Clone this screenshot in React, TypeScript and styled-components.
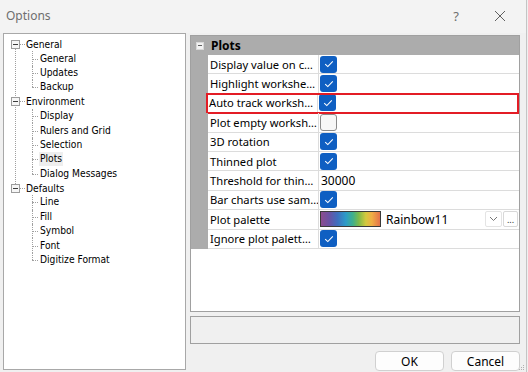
import React from 'react'
import styled, { createGlobalStyle, css } from 'styled-components'

const GlobalStyle = createGlobalStyle`
  html, body {
    margin: 0;
    padding: 0;
    background: #f0f0f0;
  }
  * {
    box-sizing: border-box;
  }
`

const tree = [
  { label: 'General', children: ['General', 'Updates', 'Backup'] },
  {
    label: 'Environment',
    children: ['Display', 'Rulers and Grid', 'Selection', 'Plots', 'Dialog Messages'],
  },
  { label: 'Defaults', children: ['Line', 'Fill', 'Symbol', 'Font', 'Digitize Format'] },
]

type Prop =
  | { label: string; kind: 'check'; checked: boolean; highlight?: boolean }
  | { label: string; kind: 'text'; value: string }
  | { label: string; kind: 'palette'; value: string }

const props: Prop[] = [
  { label: 'Display value on c…', kind: 'check', checked: true },
  { label: 'Highlight workshe…', kind: 'check', checked: true },
  { label: 'Auto track worksh…', kind: 'check', checked: true, highlight: true },
  { label: 'Plot empty worksh…', kind: 'check', checked: false },
  { label: '3D rotation', kind: 'check', checked: true },
  { label: 'Thinned plot', kind: 'check', checked: true },
  { label: 'Threshold for thin…', kind: 'text', value: '30000' },
  { label: 'Bar charts use sam…', kind: 'check', checked: true },
  { label: 'Plot palette', kind: 'palette', value: 'Rainbow11' },
  { label: 'Ignore plot palett…', kind: 'check', checked: true },
]

export default function App() {
  return (
    <>
      <GlobalStyle />
      <Dialog>
        <TitleBar>
          <Title>Options</Title>
          <TitleButton>?</TitleButton>
          <TitleButton>
            <svg width="12" height="12" viewBox="0 0 12 12">
              <path d="M1 1 L11 11 M11 1 L1 11" stroke="#606060" strokeWidth="1" fill="none" />
            </svg>
          </TitleButton>
        </TitleBar>

        <Body>
          <TreePanel>
            {tree.map((group, gi) => (
              <TreeGroup key={group.label} $last={gi === tree.length - 1}>
                <TreeRow>
                  <Expander />
                  <RootConnector />
                  <RootLabel>{group.label}</RootLabel>
                </TreeRow>
                <ChildList>
                  {group.children.map((child, ci) => (
                    <ChildRow key={child} $last={ci === group.children.length - 1}>
                      <ChildLabel $selected={child === 'Plots'}>{child}</ChildLabel>
                    </ChildRow>
                  ))}
                </ChildList>
              </TreeGroup>
            ))}
          </TreePanel>

          <RightColumn>
            <Grid>
              <CategoryRow>
                <CategoryMargin>
                  <CategoryToggle />
                </CategoryMargin>
                <CategoryLabel>Plots</CategoryLabel>
              </CategoryRow>
              {props.map(p => (
                <PropRow key={p.label}>
                  <Margin />
                  <PropCells $highlight={p.kind === 'check' && !!p.highlight}>
                    <PropLabel>{p.label}</PropLabel>
                    <PropValue>
                      {p.kind === 'check' && <CheckBox checked={p.checked} />}
                      {p.kind === 'text' && <ValueText>{p.value}</ValueText>}
                      {p.kind === 'palette' && (
                        <>
                          <Swatch />
                          <PaletteName>{p.value}</PaletteName>
                          <DropButton>
                            <svg width="9" height="6" viewBox="0 0 9 6">
                              <path d="M1 1 L4.5 4.5 L8 1" stroke="#777" strokeWidth="1" fill="none" />
                            </svg>
                          </DropButton>
                          <MoreButton>...</MoreButton>
                        </>
                      )}
                    </PropValue>
                  </PropCells>
                </PropRow>
              ))}
            </Grid>

            <Description />

            <ButtonRow>
              <DialogButton>OK</DialogButton>
              <DialogButton>Cancel</DialogButton>
            </ButtonRow>
          </RightColumn>
        </Body>

        <Grip>
          <svg width="6" height="6" viewBox="0 0 6 6">
            <rect x="4" y="0" width="1" height="1" fill="#b0b0b0" />
            <rect x="2" y="2" width="1" height="1" fill="#b0b0b0" />
            <rect x="4" y="2" width="1" height="1" fill="#b0b0b0" />
            <rect x="0" y="4" width="1" height="1" fill="#b0b0b0" />
            <rect x="2" y="4" width="1" height="1" fill="#b0b0b0" />
            <rect x="4" y="4" width="1" height="1" fill="#b0b0b0" />
          </svg>
        </Grip>
      </Dialog>
    </>
  )
}

function CheckBox({ checked }: { checked: boolean }) {
  return (
    <Box $checked={checked}>
      {checked && (
        <svg width="10" height="8" viewBox="0 0 10 8">
          <path d="M1.2 4.2 L3.8 6.6 L8.8 1.4" stroke="#fff" strokeWidth="1.1" fill="none" />
        </svg>
      )}
    </Box>
  )
}

const uiFont = `"Noto Sans", "Open Sans", sans-serif`
const treeFont = `"DejaVu Sans Condensed", "DejaVu Sans", sans-serif`

const Dialog = styled.div`
  position: relative;
  width: 527px;
  height: 372px;
  border-right: 1px solid #c4c4c4;
  background: #f0f0f0;
  display: flex;
  flex-direction: column;
  font-family: ${uiFont};
  overflow: hidden;
`

const TitleBar = styled.div`
  height: 33px;
  display: flex;
  align-items: center;
  padding: 0 0 2px 6px;
  background: #f3f3f3;
`

const Title = styled.div`
  flex: 1;
  font-size: 12px;
  color: #6e6e6e;
`

const TitleButton = styled.div`
  width: 44px;
  display: flex;
  justify-content: center;
  font-size: 13px;
  color: #6e6e6e;
  &:last-child {
    margin-right: 4px;
  }
`

const Body = styled.div`
  flex: 1;
  display: flex;
  gap: 4px;
  padding-left: 3px;
`

const TreePanel = styled.div`
  width: 183px;
  height: 337px;
  border: 1px solid #a8a8a8;
  background: #fff;
  padding-top: 3px;
  font-family: ${treeFont};
  font-size: 10.2px;
  color: #000;
`

const TreeGroup = styled.div<{ $last: boolean }>`
  position: relative;
  ${p =>
    !p.$last &&
    css`
      &::before {
        content: '';
        position: absolute;
        left: 11px;
        top: 7px;
        bottom: -7px;
        border-left: 1px dotted #a0a0a0;
      }
    `}
`

const TreeRow = styled.div`
  position: relative;
  height: 14.4px;
  display: flex;
  align-items: center;
  padding-left: 7px;
`

const Expander = styled.div`
  position: relative;
  z-index: 1;
  width: 9px;
  height: 9px;
  border: 1px solid #9c9c9c;
  background: #f6f6f6;
  &::after {
    content: '';
    position: absolute;
    left: 1px;
    right: 1px;
    top: 3px;
    height: 1px;
    background: #3c3c3c;
  }
`

const RootConnector = styled.div`
  width: 5px;
  border-top: 1px dotted #a0a0a0;
`

const RootLabel = styled.span`
  padding-left: 1px;
`

const ChildList = styled.div``

const ChildRow = styled.div<{ $last: boolean }>`
  position: relative;
  height: 14.4px;
  display: flex;
  align-items: center;
  padding-left: 35px;
  &::before {
    content: '';
    position: absolute;
    left: 28px;
    top: 50%;
    width: 6px;
    border-top: 1px dotted #a0a0a0;
  }
  &::after {
    content: '';
    position: absolute;
    left: 28px;
    top: 0;
    height: ${p => (p.$last ? '50%' : '100%')};
    border-left: 1px dotted #a0a0a0;
  }
`

const ChildLabel = styled.span<{ $selected: boolean }>`
  padding: 0 1px;
  line-height: 14px;
  background: ${p => (p.$selected ? '#eeeeee' : 'transparent')};
`

const RightColumn = styled.div`
  width: 330px;
  display: flex;
  flex-direction: column;
  padding-top: 2px;
`

const Grid = styled.div`
  height: 277px;
  border: 1px solid #a0a0a0;
  background: #fff;
`

const marginWidth = 17

const CategoryRow = styled.div`
  height: 19px;
  display: flex;
  align-items: center;
  background: #acacac;
`

const CategoryMargin = styled.div`
  width: ${marginWidth}px;
  display: flex;
  justify-content: center;
`

const CategoryToggle = styled.div`
  position: relative;
  width: 8px;
  height: 8px;
  border: 1px solid #d8d8d8;
  background: #f2f2f2;
  &::after {
    content: '';
    position: absolute;
    left: 1px;
    right: 1px;
    top: 2.5px;
    height: 1px;
    background: #606060;
  }
`

const CategoryLabel = styled.div`
  padding-left: 3px;
  font-size: 12px;
  font-weight: 700;
  color: #000;
`

const PropRow = styled.div`
  height: 19.4px;
  display: flex;
`

const Margin = styled.div`
  width: ${marginWidth}px;
  background: #acacac;
`

const PropCells = styled.div<{ $highlight: boolean }>`
  flex: 1;
  display: grid;
  grid-template-columns: 111px 1fr;
  ${p =>
    p.$highlight &&
    css`
      outline: 2px solid #e31c25;
      outline-offset: -1px;
      margin-left: -1px;
      margin-right: 1px;
    `}
`

const PropLabel = styled.div`
  display: flex;
  align-items: center;
  padding-left: 2px;
  border-right: 1px solid #dcdcdc;
  border-bottom: 1px solid #dcdcdc;
  font-size: 11.2px;
  color: #000;
  white-space: nowrap;
  overflow: hidden;
`

const PropValue = styled.div`
  display: flex;
  align-items: center;
  padding-left: 1px;
  padding-right: 1px;
  border-bottom: 1px solid #dcdcdc;
  font-size: 12px;
  color: #000;
`

const Box = styled.div<{ $checked: boolean }>`
  width: 17px;
  height: 17px;
  border-radius: 3px;
  display: flex;
  align-items: center;
  justify-content: center;
  ${p =>
    p.$checked
      ? css`
          background: #0f5fc2;
        `
      : css`
          background: #f7f7f7;
          border: 1px solid #8a8a8a;
        `}
`

const ValueText = styled.span`
  padding-left: 1px;
`

const Swatch = styled.div`
  width: 61px;
  height: 16px;
  border: 1px solid #3a3a3a;
  background: linear-gradient(
    to right,
    #8c4c8e 0%,
    #6a52a4 14%,
    #3f6fbe 28%,
    #2d9bc8 42%,
    #3fb08c 54%,
    #7dba4a 64%,
    #d4c93e 76%,
    #f0ae45 86%,
    #e4724c 100%
  );
`

const PaletteName = styled.span`
  flex: 1;
  padding-left: 5px;
`

const DropButton = styled.div`
  width: 17px;
  height: 16px;
  display: flex;
  align-items: center;
  justify-content: center;
  background: #fff;
  border: 1px solid #e4e4e4;
  border-radius: 2px;
`

const MoreButton = styled.div`
  width: 15px;
  height: 16px;
  margin-left: 1px;
  display: flex;
  align-items: flex-end;
  justify-content: center;
  padding-bottom: 2px;
  background: #fff;
  border: 1px solid #d8d8d8;
  border-radius: 2px;
  font-size: 9px;
  line-height: 9px;
  color: #333;
`

const Description = styled.div`
  height: 28px;
  margin-top: 4px;
  border: 1px solid #a0a0a0;
  background: #f0f0f0;
`

const ButtonRow = styled.div`
  display: flex;
  justify-content: flex-end;
  gap: 7px;
  margin-top: 7px;
`

const DialogButton = styled.div`
  width: 69px;
  height: 20px;
  display: flex;
  align-items: center;
  justify-content: center;
  background: #fdfdfd;
  border: 1px solid #d0d0d0;
  border-radius: 4px;
  font-size: 12px;
  color: #000;
`

const Grip = styled.div`
  position: absolute;
  right: 1px;
  bottom: 1px;
  width: 6px;
  height: 6px;
  display: flex;
`
